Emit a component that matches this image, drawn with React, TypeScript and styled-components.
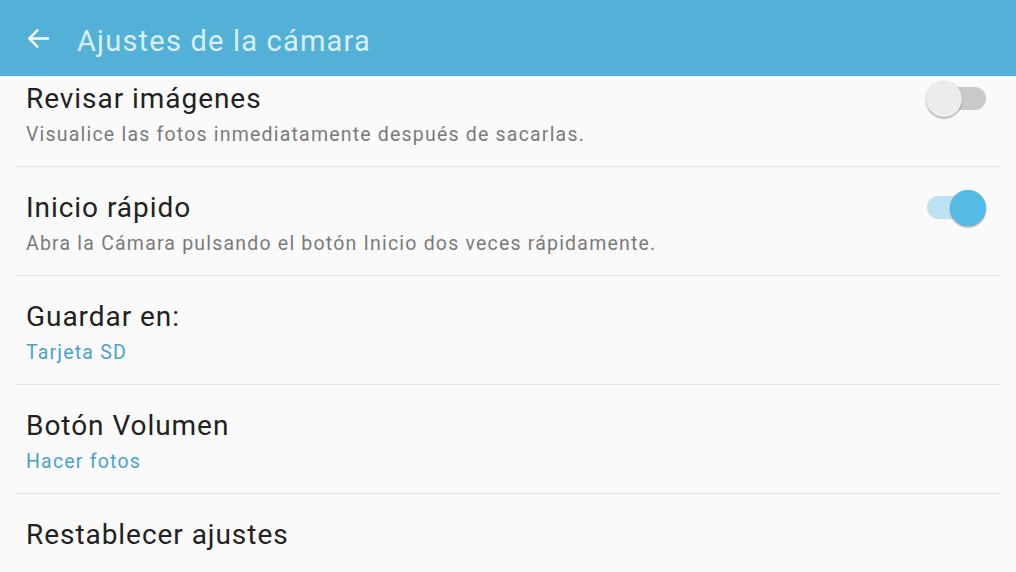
import React from "react";
import styled, { createGlobalStyle } from "styled-components";

const GlobalStyle = createGlobalStyle`
  html, body {
    margin: 0;
    padding: 0;
    background: #fafafa;
    font-family: Roboto, "Noto Sans", Arial, sans-serif;
    overflow: hidden;
  }
  * { box-sizing: border-box; }
`;

const Screen = styled.div`
  width: 1016px;
  height: 572px;
  overflow: hidden;
  background: #fafafa;
  display: flex;
  flex-direction: column;
`;

const Header = styled.header`
  position: relative;
  z-index: 1;
  flex: 0 0 auto;
  height: 76px;
  background: #53b0d7;
  display: flex;
  align-items: center;
  padding-left: 24px;
  gap: 24px;
  box-shadow: 0 1px 1px rgba(0, 0, 0, 0.06);
`;

const BackButton = styled.button`
  border: 0;
  background: none;
  padding: 0;
  width: 29px;
  height: 29px;
  display: flex;
  align-items: center;
  justify-content: center;
  cursor: pointer;
`;

const Title = styled.h1`
  margin: 0;
  font-family: Roboto, "Noto Sans", sans-serif;
  font-weight: 400;
  font-size: 29px;
  color: #d9eff9;
  letter-spacing: 1.2px;
  padding-top: 5px;
`;

const List = styled.div`
  margin-top: -18px;
  display: flex;
  flex-direction: column;
  padding: 0 16px;
`;

const Row = styled.div<{ $last?: boolean }>`
  height: 109px;
  flex: 0 0 auto;
  display: flex;
  align-items: flex-start;
  justify-content: space-between;
  padding: 24px 14px 0 10px;
  border-bottom: ${(p) => (p.$last ? "none" : "1px solid #e3e3e3")};
`;

const Texts = styled.div`
  display: flex;
  flex-direction: column;
`;

const RowTitle = styled.div`
  font-size: 28px;
  line-height: 34px;
  color: #222222;
  letter-spacing: 0.95px;
`;

const RowSub = styled.div<{ $accent?: boolean }>`
  margin-top: 6px;
  font-size: 19.5px;
  line-height: 26px;
  letter-spacing: 1.2px;
  color: ${(p) => (p.$accent ? "#4aa3ca" : "#7b7b7b")};
`;

const SwitchTrack = styled.div<{ $on: boolean }>`
  position: relative;
  width: 59px;
  height: 23px;
  border-radius: 12px;
  margin-top: 5px;
  background: ${(p) => (p.$on ? "#bde3f3" : "#cacaca")};
  flex: 0 0 auto;
`;

const SwitchThumb = styled.div<{ $on: boolean }>`
  position: absolute;
  top: -6.5px;
  left: ${(p) => (p.$on ? "23px" : "-1px")};
  width: 36px;
  height: 36px;
  border-radius: 50%;
  background: ${(p) => (p.$on ? "#56bbe4" : "#ececec")};
  box-shadow: 0 1.5px 1.5px rgba(0, 0, 0, 0.3), 0 0 0 0.5px rgba(0, 0, 0, 0.08);
`;

const Switch = ({ on }: { on: boolean }) => (
  <SwitchTrack $on={on}>
    <SwitchThumb $on={on} />
  </SwitchTrack>
);

type Item = {
  title: string;
  sub?: string;
  accent?: boolean;
  toggle?: boolean;
};

const items: Item[] = [
  {
    title: "Revisar imágenes",
    sub: "Visualice las fotos inmediatamente después de sacarlas.",
    toggle: false,
  },
  {
    title: "Inicio rápido",
    sub: "Abra la Cámara pulsando el botón Inicio dos veces rápidamente.",
    toggle: true,
  },
  { title: "Guardar en:", sub: "Tarjeta SD", accent: true },
  { title: "Botón Volumen", sub: "Hacer fotos", accent: true },
  { title: "Restablecer ajustes" },
];

export default function App() {
  return (
    <>
      <GlobalStyle />
      <Screen>
        <Header>
          <BackButton aria-label="Atrás">
            <svg width="27" height="27" viewBox="0 0 24 24" fill="none">
              <path
                d="M20.5 12H4M11 4.8L3.8 12l7.2 7.2"
                stroke="#ffffff"
                strokeWidth="2.1"
                strokeLinecap="round"
                strokeLinejoin="round"
              />
            </svg>
          </BackButton>
          <Title>Ajustes de la cámara</Title>
        </Header>
        <List>
          {items.map((it, i) => (
            <Row key={it.title} $last={i === items.length - 1}>
              <Texts>
                <RowTitle>{it.title}</RowTitle>
                {it.sub && <RowSub $accent={it.accent}>{it.sub}</RowSub>}
              </Texts>
              {it.toggle !== undefined && <Switch on={it.toggle} />}
            </Row>
          ))}
        </List>
      </Screen>
    </>
  );
}
